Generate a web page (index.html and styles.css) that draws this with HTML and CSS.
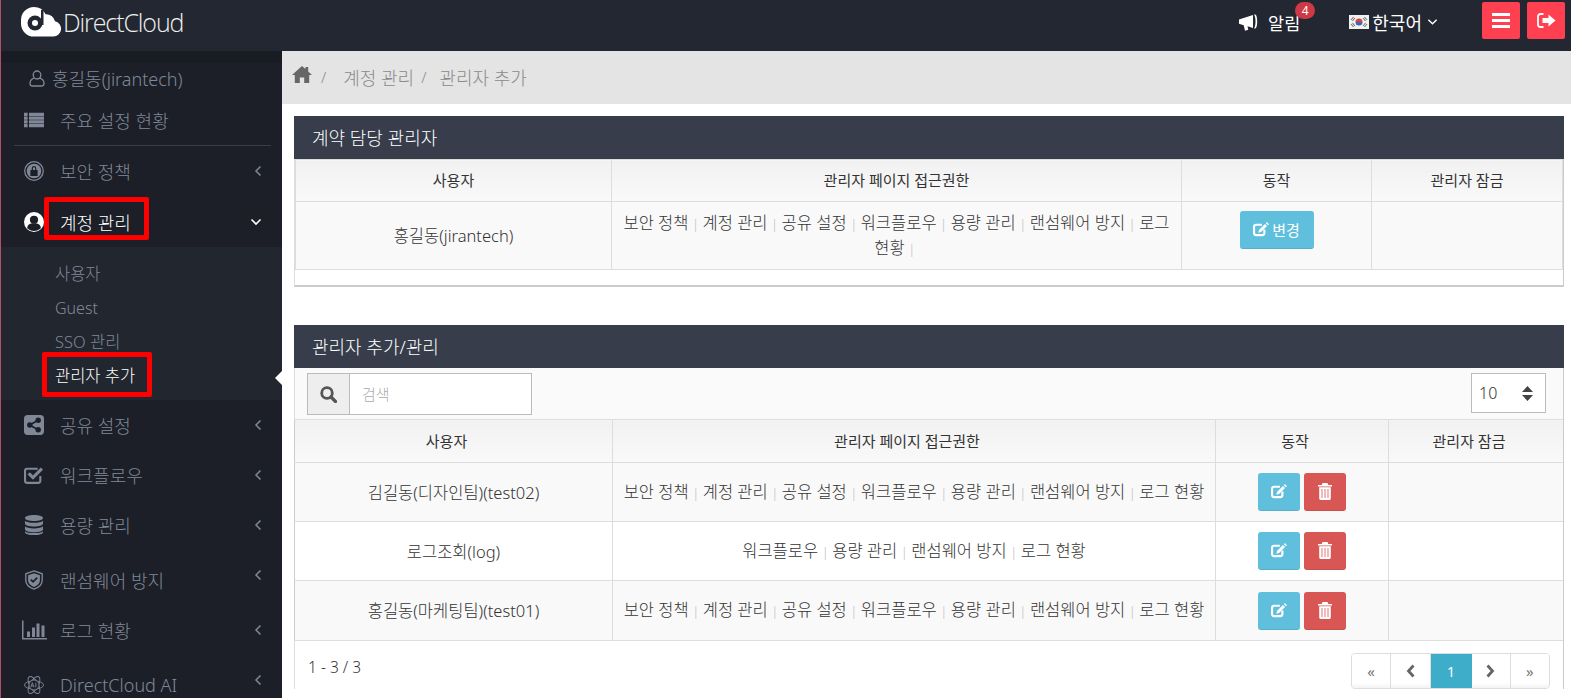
FILE: index.html
```html
<!DOCTYPE html>
<html lang="ko">
<head>
    <meta charset="UTF-8">
    <title>DirectCloud - 관리자 추가</title>
    <link rel="stylesheet" href="styles.css">
</head>
<body>
    <svg class="icon-defs" width="0" height="0">
        <defs>
            <symbol id="i-edit" viewBox="0 0 18 16"><path fill="none" stroke="currentColor" stroke-width="2.400" d="M10 2.700H3.500c-1.300 0-2.300 1-2.300 2.300v7c0 1.300 1 2.300 2.300 2.300h7c1.300 0 2.300-1 2.300-2.300V8"/><path fill="currentColor" d="M13.400 1.800l2.400 2.400-6.700 6.700-3.100.7.700-3.100zM14.400.9l.7-.7c.3-.3.7-.3 1 0l1.400 1.400c.3.3.3.7 0 1l-.7.7z"/></symbol>
            <symbol id="i-trash" viewBox="0 0 14 17"><path fill="currentColor" d="M4.500 0h5l.8 2H14v1.400H0V2h3.700zM1.200 4.200h11.600v11c0 1-.7 1.800-1.600 1.800H2.800c-.9 0-1.600-.8-1.600-1.800zM3.600 6v9h.8V6zm3 0v9h.8V6zm3 0v9h.8V6z"/></symbol>
            <symbol id="i-left" viewBox="0 0 8 12"><path fill="none" stroke="currentColor" stroke-width="1.500" d="M6.500 1.500L2 6l4.500 4.500"/></symbol>
        </defs>
    </svg>

    <header class="topbar">
        <a class="logo">
            <svg class="logo-mark" viewBox="0 0 40 30">
                <path fill="#fff" d="M13 0a13 13 0 0 1 11.600 7.200A9 9 0 0 1 34 14.200a7.800 7.800 0 0 1-1.600 15.400H13A13 13 0 0 1 0 16.300V13A13 13 0 0 1 13 0z"/>
                <circle cx="14" cy="16" r="7.500" fill="#222731"/>
                <circle cx="14" cy="16" r="3" fill="#fff"/>
                <rect x="20" y="3" width="2.500" height="15" fill="#222731"/>
            </svg>
            <span class="logo-text">DirectCloud</span>
        </a>
        <div class="top-right">
            <a class="notice">
                <svg class="notice-icon" viewBox="0 0 20 17"><path fill="#fff" d="M0 5.500L14 1v13L8.500 12.300l.8 3.400-3.300 1-1.300-5.500L0 9.800zM15 .5h1.200c1.200 0 2 3 2 7s-.8 7-2 7H15c1-1.500 1.500-4 1.500-7S16 2 15 .5z"/></svg>
                <span>알림</span>
                <span class="badge">4</span>
            </a>
            <a class="lang">
                <svg class="flag" viewBox="0 0 20 14">
                    <rect width="20" height="14" fill="#f1f1f1"/>
                    <path fill="#d8433f" d="M6.500 7a3.500 3.500 0 0 1 7 0z"/>
                    <path fill="#3f63b5" d="M6.500 7a3.500 3.500 0 0 0 7 0z"/>
                    <path stroke="#777" stroke-width="1.100" d="M2 5l2.500-3M3.500 6L6 3M14 3l2.500 3M15.500 2L18 5M2 9l2.500 3M3.500 8L6 11M14 11l2.500-3M15.500 12L18 9"/>
                </svg>
                <span>한국어</span>
                <svg class="lang-caret" viewBox="0 0 12 8"><path fill="none" stroke="#fff" stroke-width="1.600" d="M1.500 1.500L6 6l4.500-4.500"/></svg>
            </a>
            <div class="top-btns">
                <button class="top-btn">
                    <svg viewBox="0 0 18 15" width="18" height="15"><path fill="#fff" d="M0 0h18v3H0zM0 6h18v3H0zM0 12h18v3H0z"/></svg>
                </button>
                <button class="top-btn">
                    <svg viewBox="0 0 19 15" width="19" height="15"><path fill="none" stroke="#fff" stroke-width="1.800" d="M6.500 1H3.500C2 1 1 2 1 3.500v8C1 13 2 14 3.500 14h3"/><path fill="#fff" d="M5.500 5h6V1.500l7 6-7 6V10h-6z"/></svg>
                </button>
            </div>
        </div>
    </header>

    <div class="layout">
        <nav class="sidebar">
            <div class="profile">
                <svg class="profile-icon" viewBox="0 0 16 17"><path fill="none" stroke="currentColor" stroke-width="1.300" d="M8 1a3.800 3.800 0 0 1 3.800 3.800C11.800 7.500 10 9 8 9S4.200 7.500 4.200 4.800A3.800 3.800 0 0 1 8 1zM5 8.200C2.800 9 1 10.800 1 13.500 1 15 2 16 3.500 16h9c1.500 0 2.500-1 2.500-2.500 0-2.700-1.800-4.500-4-5.300"/></svg>
                <span>홍길동(jirantech)</span>
            </div>
            <a class="nav-item nav-summary">
                <svg class="nav-icon" viewBox="0 0 22 16"><path fill="currentColor" d="M0 0h4v3.500H0zM5.500 0H22v3.500H5.500zM0 4.200h4v3.500H0zM5.500 4.200H22v3.500H5.500zM0 8.400h4v3.500H0zM5.500 8.400H22v3.500H5.500zM0 12.500h4V16H0zM5.500 12.500H22V16H5.500z"/></svg>
                <span>주요 설정 현황</span>
            </a>
            <div class="nav-divider"></div>
            <a class="nav-item">
                <svg class="nav-icon" viewBox="0 0 22 22"><circle cx="11" cy="11" r="10.200" fill="none" stroke="currentColor" stroke-width="1.400"/><circle cx="11" cy="11" r="8" fill="currentColor"/><path fill="#1c1f27" d="M7 10h8v6.500H7zM8.500 10V8a2.500 2.500 0 0 1 5 0v2h-1.300V8a1.200 1.200 0 0 0-2.400 0v2z"/></svg>
                <span>보안 정책</span>
                <svg class="chev"><use href="#i-left"/></svg>
            </a>
            <a class="nav-item nav-open">
                <svg class="nav-icon" viewBox="0 0 22 22"><circle cx="11" cy="11" r="11" fill="#fff"/><circle cx="11" cy="8.500" r="4.500" fill="#1c1f27"/><path fill="#1c1f27" d="M3.500 18c0-3.500 2.500-5.500 7.500-5.500s7.500 2 7.500 5.500c-2 1.800-4.500 2.800-7.500 2.800s-5.500-1-7.500-2.800z"/></svg>
                <span>계정 관리</span>
                <svg class="chev-down" viewBox="0 0 12 8"><path fill="none" stroke="#fff" stroke-width="1.600" d="M1.500 1.500L6 6l4.500-4.500"/></svg>
            </a>
            <div class="submenu">
                <a class="sub-item">사용자</a>
                <a class="sub-item sub-latin">Guest</a>
                <a class="sub-item">SSO 관리</a>
                <a class="sub-item sub-active">관리자 추가</a>
            </div>
            <a class="nav-item">
                <svg class="nav-icon" viewBox="0 0 19 19"><rect width="19" height="19" rx="3.500" fill="currentColor"/><g fill="#1c1f27"><circle cx="5.500" cy="9.500" r="2.600"/><circle cx="13.500" cy="5" r="2.600"/><circle cx="13.500" cy="14" r="2.600"/><path d="M5 8.800l8-4.500.8 1.300-8 4.500zM5.800 8.900l8 4.500-.8 1.300-8-4.500z"/></g></svg>
                <span>공유 설정</span>
                <svg class="chev"><use href="#i-left"/></svg>
            </a>
            <a class="nav-item">
                <svg class="nav-icon" viewBox="0 0 19 18"><path fill="none" stroke="currentColor" stroke-width="2" d="M15.500 10v4.500c0 1.100-.9 2-2 2H3c-1.100 0-2-.9-2-2V5c0-1.100.9-2 2-2h10"/><path fill="none" stroke="currentColor" stroke-width="3" d="M4.500 7.500l4 4L17 3"/></svg>
                <span>워크플로우</span>
                <svg class="chev"><use href="#i-left"/></svg>
            </a>
            <a class="nav-item">
                <svg class="nav-icon" viewBox="0 0 19 21"><path fill="currentColor" d="M9.500 0C14.700 0 19 1.400 19 3.200S14.700 6.400 9.500 6.400 0 5 0 3.200 4.300 0 9.500 0zM0 6c1.500 1.500 5 2.200 9.500 2.200S17.500 7.500 19 6v3c0 1.800-4.300 3.200-9.500 3.200S0 10.800 0 9zM0 11.900c1.500 1.500 5 2.200 9.500 2.200s8-.7 9.500-2.200v3c0 1.800-4.300 3.200-9.500 3.200S0 16.700 0 14.900zM0 17c1.500 1.500 5 2 9.500 2s8-.5 9.500-2v1c0 1.800-4.300 3-9.500 3S0 19.800 0 18z"/></svg>
                <span>용량 관리</span>
                <svg class="chev"><use href="#i-left"/></svg>
            </a>
            <a class="nav-item nav-item-gap">
                <svg class="nav-icon" viewBox="0 0 20 22"><path fill="none" stroke="currentColor" stroke-width="1.500" d="M10 1l9 3.200v7c0 4.500-3.500 8-9 9.800-5.500-1.800-9-5.300-9-9.800v-7z"/><path fill="currentColor" d="M10 3.500l6.500 2.300v5.500c0 3.300-2.500 6-6.500 7.400-4-1.400-6.500-4.100-6.500-7.400V5.800z"/><path fill="none" stroke="#1c1f27" stroke-width="2" d="M6.500 10.500l2.500 2.500 4.500-4.500"/></svg>
                <span>랜섬웨어 방지</span>
                <svg class="chev"><use href="#i-left"/></svg>
            </a>
            <a class="nav-item">
                <svg class="nav-icon nav-icon-wide" viewBox="0 0 25 19"><path fill="currentColor" d="M0 0h1.500v17.500H25V19H0zM5 11h3v5.500H5zM10 7h3v9.500h-3zM14.500 3h3v13.500h-3zM19.500 5h3v11.500h-3z"/></svg>
                <span>로그 현황</span>
                <svg class="chev"><use href="#i-left"/></svg>
            </a>
            <a class="nav-item nav-item-gap">
                <svg class="nav-icon" viewBox="0 0 22 22"><g fill="none" stroke="currentColor" stroke-width="1"><ellipse cx="11" cy="11" rx="10.500" ry="4.500"/><ellipse cx="11" cy="11" rx="10.500" ry="4.500" transform="rotate(60 11 11)"/><ellipse cx="11" cy="11" rx="10.500" ry="4.500" transform="rotate(120 11 11)"/><circle cx="11" cy="11" r="5.500" fill="#1c1f27"/></g><path fill="none" stroke="currentColor" stroke-width="1" d="M7.500 13.500L9.200 8.500l1.700 5M8.200 12h2M13 8.500v5"/></svg>
                <span>DirectCloud AI</span>
                <svg class="chev"><use href="#i-left"/></svg>
            </a>
            <span class="nav-pointer"></span>
            <span class="mark mark-menu"></span>
            <span class="mark mark-sub"></span>
        </nav>

        <main class="content">
            <div class="breadcrumb">
                <svg class="home" viewBox="0 0 20 17"><path fill="#666" d="M10 0l3.500 3.100V1h2.700v4.500L20 9h-2.800v8h-5v-5.500H7.800V17h-5V9H0z"/></svg>
                <span class="crumb-sep">/</span>
                <span class="crumb crumb-first">계정 관리</span>
                <span class="crumb-sep">/</span>
                <span class="crumb">관리자 추가</span>
            </div>

            <section class="panel panel-owner">
                <h2 class="panel-title">계약 담당 관리자</h2>
                <table class="grid">
                    <colgroup>
                        <col class="o-user"><col class="o-perm"><col class="o-act"><col class="o-lock">
                    </colgroup>
                    <thead>
                        <tr><th>사용자</th><th>관리자 페이지 접근권한</th><th>동작</th><th>관리자 잠금</th></tr>
                    </thead>
                    <tbody>
                        <tr class="odd owner-row">
                            <td>홍길동(jirantech)</td>
                            <td class="perm">보안 정책<i>|</i>계정 관리<i>|</i>공유 설정<i>|</i>워크플로우<i>|</i>용량 관리<i>|</i>랜섬웨어 방지<i>|</i>로그 현황<i>|</i></td>
                            <td><button class="btn btn-info btn-change"><svg class="i-edit"><use href="#i-edit"/></svg>변경</button></td>
                            <td></td>
                        </tr>
                    </tbody>
                </table>
            </section>

            <section class="panel panel-admins">
                <h2 class="panel-title">관리자 추가/관리</h2>
                <div class="toolbar">
                    <div class="search">
                        <span class="search-addon">
                            <svg viewBox="0 0 17 17" width="17" height="17"><circle cx="7" cy="7" r="5.300" fill="none" stroke="#555" stroke-width="2.800"/><path stroke="#555" stroke-width="3.200" stroke-linecap="round" d="M11 11l4.500 4.500"/></svg>
                        </span>
                        <input class="search-input" type="text" placeholder="검색">
                    </div>
                    <div class="page-size">
                        <span>10</span>
                        <svg viewBox="0 0 11 15" width="11" height="15"><path fill="#444" d="M5.500 0L11 6H0zM0 9h11l-5.500 6z"/></svg>
                    </div>
                </div>
                <table class="grid">
                    <colgroup>
                        <col class="a-user"><col class="a-perm"><col class="a-act"><col class="a-lock">
                    </colgroup>
                    <thead>
                        <tr><th>사용자</th><th>관리자 페이지 접근권한</th><th>동작</th><th>관리자 잠금</th></tr>
                    </thead>
                    <tbody>
                        <tr class="odd">
                            <td>김길동(디자인팀)(test02)</td>
                            <td class="perm">보안 정책<i>|</i>계정 관리<i>|</i>공유 설정<i>|</i>워크플로우<i>|</i>용량 관리<i>|</i>랜섬웨어 방지<i>|</i>로그 현황</td>
                            <td class="actions"><button class="btn btn-info btn-icon"><svg class="i-edit"><use href="#i-edit"/></svg></button><button class="btn btn-danger btn-icon"><svg class="i-trash"><use href="#i-trash"/></svg></button></td>
                            <td></td>
                        </tr>
                        <tr>
                            <td>로그조회(log)</td>
                            <td class="perm">워크플로우<i>|</i>용량 관리<i>|</i>랜섬웨어 방지<i>|</i>로그 현황</td>
                            <td class="actions"><button class="btn btn-info btn-icon"><svg class="i-edit"><use href="#i-edit"/></svg></button><button class="btn btn-danger btn-icon"><svg class="i-trash"><use href="#i-trash"/></svg></button></td>
                            <td></td>
                        </tr>
                        <tr class="odd row-last">
                            <td>홍길동(마케팅팀)(test01)</td>
                            <td class="perm">보안 정책<i>|</i>계정 관리<i>|</i>공유 설정<i>|</i>워크플로우<i>|</i>용량 관리<i>|</i>랜섬웨어 방지<i>|</i>로그 현황</td>
                            <td class="actions"><button class="btn btn-info btn-icon"><svg class="i-edit"><use href="#i-edit"/></svg></button><button class="btn btn-danger btn-icon"><svg class="i-trash"><use href="#i-trash"/></svg></button></td>
                            <td></td>
                        </tr>
                    </tbody>
                </table>
                <div class="table-foot">
                    <span class="count">1 - 3 / 3</span>
                    <div class="pager">
                        <a class="pg pg-small">«</a>
                        <a class="pg"><svg viewBox="0 0 9 14" width="9" height="14"><path fill="none" stroke="#666" stroke-width="2.800" d="M7.500 1.500L2.500 7l5 5.500"/></svg></a>
                        <a class="pg pg-active">1</a>
                        <a class="pg"><svg viewBox="0 0 9 14" width="9" height="14"><path fill="none" stroke="#666" stroke-width="2.800" d="M1.500 1.500L6.500 7l-5 5.500"/></svg></a>
                        <a class="pg pg-small">»</a>
                    </div>
                </div>
            </section>
        </main>
    </div>
</body>
</html>
```
FILE: styles.css
```css
* {
    box-sizing: border-box;
}

html, body {
    margin: 0;
    padding: 0;
}

body {
    width: 1571px;
    height: 698px;
    overflow: hidden;
    font-family: "Noto Sans", "Noto Sans CJK KR", sans-serif;
    font-size: 15px;
    color: #333;
    background-color: #fff;
    border-left: 1px solid #b0506a;
    display: flex;
    flex-direction: column;
}

.icon-defs {
    position: absolute;
}

/* top bar */
.topbar {
    height: 51px;
    flex: none;
    background-color: #222731;
    display: flex;
    justify-content: space-between;
    color: #fff;
}

.logo {
    display: flex;
    align-items: center;
    padding: 0 0 7px 20px;
}

.logo-mark {
    width: 40px;
    height: 30px;
}

.logo-text {
    font-family: "Open Sans", sans-serif;
    font-weight: 300;
    font-size: 25px;
    letter-spacing: -1.1px;
    margin-left: 2px;
    color: #eee;
}

.top-right {
    display: flex;
    align-items: center;
}

.notice {
    position: relative;
    display: flex;
    align-items: center;
    gap: 9px;
    font-size: 17.5px;
    padding-bottom: 7px;
}

.notice-icon {
    width: 20px;
    height: 17px;
}

.badge {
    position: absolute;
    left: 56px;
    top: -8px;
    min-width: 20px;
    height: 17px;
    border-radius: 9px;
    background-color: #cf3945;
    font-size: 12px;
    line-height: 17px;
    text-align: center;
}

.lang {
    display: flex;
    align-items: center;
    gap: 3px;
    margin-left: 49px;
    font-size: 18px;
    padding-bottom: 7px;
}

.flag {
    width: 20px;
    height: 14px;
}

.lang-caret {
    width: 11px;
    height: 8px;
    margin-left: 2px;
}

.top-btns {
    display: flex;
    gap: 7px;
    margin-left: 44px;
    margin-right: 6px;
    padding-bottom: 11px;
}

.top-btn {
    width: 38px;
    height: 37px;
    border: 0;
    border-radius: 2px;
    background-color: #ff4051;
    display: flex;
    align-items: center;
    justify-content: center;
    padding: 0;
}

.layout {
    flex: 1;
    display: flex;
    min-height: 0;
}

/* sidebar */
.sidebar {
    position: relative;
    width: 281px;
    flex: none;
    background: linear-gradient(#191c23 12px, #1c1f27 12px);
    color: #808898;
    font-size: 18px;
    font-weight: 300;
    padding-top: 12px;
    overflow: hidden;
}

.profile {
    height: 34px;
    display: flex;
    align-items: center;
    gap: 7px;
    padding: 0 0 4px 28px;
    font-size: 18px;
}

.profile-icon {
    width: 16px;
    height: 17px;
}

.nav-item {
    height: 50px;
    display: flex;
    align-items: center;
    padding-left: 23px;
}

.nav-item span {
    flex: 1;
}

.nav-summary {
    height: 46px;
}

.nav-divider {
    height: 1px;
    margin: 2px 11px 0 13px;
    background-color: #3b3e45;
}

.nav-item-gap {
    margin-top: 5px;
}

.nav-item-gap .chev {
    margin-bottom: 10px;
}

.nav-icon {
    width: 20px;
    height: 20px;
    flex: none;
    margin-right: 16px;
}

.nav-icon-wide {
    width: 25px;
    margin-left: -2px;
    margin-right: 13px;
}

.chev {
    width: 8px;
    height: 12px;
    margin-right: 20px;
}

.chev-down {
    width: 12px;
    height: 8px;
    margin-right: 20px;
}

.nav-open {
    height: 51px;
    color: #fff;
}

.submenu {
    height: 153px;
    background-color: #22262f;
    padding-top: 10px;
}

.sub-item {
    display: block;
    height: 34px;
    line-height: 34px;
    padding-left: 54px;
    font-size: 16.5px;
}

.sub-latin {
    font-size: 16px;
}

.sub-active {
    color: #fff;
}

/* white notch pointing at the current page */
.nav-pointer {
    position: absolute;
    right: 0;
    top: 320px;
    border: 7px solid transparent;
    border-right-color: #fff;
    border-left-width: 0;
}

.mark {
    position: absolute;
    border: 5px solid #ff0000;
    border-radius: 2px;
}

.mark-menu {
    left: 43px;
    top: 146px;
    width: 105px;
    height: 43px;
}

.mark-sub {
    left: 41px;
    top: 301px;
    width: 110px;
    height: 45px;
}

/* main */
.content {
    flex: 1;
    min-width: 0;
}

.breadcrumb {
    height: 53px;
    background-color: #e4e4e4;
    color: #8a8a8a;
    font-weight: 300;
    display: flex;
    align-items: center;
    padding: 0 0 2px 10px;
    font-size: 18px;
}

.home {
    width: 20px;
    height: 17px;
    margin: 0 2px 4px 0;
}

.crumb-sep {
    margin: 0 13px 0 7px;
    font-size: 15px;
}

.crumb-first {
    margin-left: 4px;
}

.panel {
    margin-left: 12px;
    margin-right: 7px;
}

.panel-owner {
    margin-top: 12px;
    height: 171px;
    border-bottom: 2px solid #ccc;
    border-left: 1px solid #ddd;
    border-right: 1px solid #ccc;
}

.panel-admins {
    margin-top: 38px;
    border-right: 1px solid #ccc;
}

.panel-title {
    margin: 0;
    height: 43px;
    background-color: #373d4b;
    color: #fff;
    font-size: 18px;
    font-weight: 300;
    line-height: 44px;
    padding-left: 18px;
}

.panel-owner .panel-title {
    margin-left: -1px;
    margin-right: -1px;
}

.panel-admins .panel-title {
    margin-right: -1px;
}

.grid {
    width: 100%;
    table-layout: fixed;
    border-collapse: collapse;
    font-size: 16.5px;
    font-weight: 300;
    line-height: 23px;
}

.grid th,
.grid td {
    border: 1px solid #ddd;
    text-align: center;
    padding: 0 8px;
}

.grid th {
    height: 43px;
    font-size: 15px;
    font-weight: 400;
    background: linear-gradient(#f1f1f1, #f9f9f9);
}

.panel-owner .grid th {
    height: 42px;
}

/* the data table header sits a little left of its column */
.panel-admins .grid th {
    padding-right: 22px;
}

.grid td {
    height: 59px;
}

.row-last td {
    height: 60px;
}

.panel-admins .grid tr > :first-child {
    border-left-color: #ccc;
}

.panel-admins .grid tr > :last-child {
    border-right: 0;
}

.odd td {
    background-color: #f9f9f9;
}

.owner-row td {
    height: 68px;
}

.perm i {
    font-style: normal;
    color: #bbb;
    margin: 0 3.5px;
    font-size: 13px;
}

.o-user { width: 316px; }
.o-perm { width: 570px; }
.o-act { width: 190px; }
.a-user { width: 318px; }
.a-perm { width: 603px; }
.a-act { width: 173px; }

.btn {
    border: 0;
    border-bottom: 1px solid rgba(0, 0, 0, .08);
    border-radius: 3px;
    color: #fff;
    height: 38px;
    padding: 0;
    font-family: inherit;
    font-size: 15px;
    vertical-align: middle;
}

.btn-info {
    background-color: #5fbfdc;
}

.btn-danger {
    background-color: #d85653;
}

.btn-change {
    width: 74px;
    margin-bottom: 12px;
    display: inline-flex;
    align-items: center;
    justify-content: center;
    gap: 3px;
}

.btn-icon {
    width: 42px;
    display: inline-flex;
    align-items: center;
    justify-content: center;
}

.btn-icon + .btn-icon {
    margin-left: 4px;
}

.i-edit {
    width: 16px;
    height: 15px;
}

.i-trash {
    width: 14px;
    height: 17px;
}

.toolbar {
    height: 51px;
    background-color: #fafafa;
    display: flex;
    justify-content: space-between;
    padding: 5px 17px 0 12px;
    border-left: 1px solid #ddd;
}

.search {
    display: flex;
    width: 225px;
    height: 42px;
    border: 1px solid #bbb;
}

.search-addon {
    width: 42px;
    background-color: #eee;
    border-right: 1px solid #bbb;
    display: flex;
    align-items: center;
    justify-content: center;
}

.search-input {
    flex: 1;
    min-width: 0;
    border: 0;
    padding: 0 12px;
    font-family: inherit;
    font-size: 15px;
    font-weight: 300;
    outline: 0;
}

.search-input::placeholder {
    color: #aaa;
}

.page-size {
    width: 75px;
    height: 40px;
    border: 1px solid #bbb;
    background-color: #fff;
    display: flex;
    align-items: center;
    justify-content: space-between;
    padding: 0 12px 0 7px;
    font-size: 16px;
    font-weight: 300;
}

.table-foot {
    display: flex;
    justify-content: space-between;
    padding: 12px 13px 0 13px;
    border-left: 1px solid #ddd;
}

.count {
    font-size: 15.500px;
    font-weight: 300;
    margin-top: 3px;
}

.pager {
    display: flex;
    width: 199px;
    height: 36px;
    border: 1px solid #ddd;
    border-radius: 4px;
    overflow: hidden;
}

.pg {
    flex: 1;
    display: flex;
    align-items: center;
    justify-content: center;
    color: #777;
    border-right: 1px solid #ddd;
    background: linear-gradient(#fff 85%, #f3f3f3);
}

.pg:last-child {
    border-right: 0;
}

.pg-small {
    font-size: 15px;
}

.pg-active {
    flex: none;
    width: 41px;
    background: #3dadc9;
    color: #fff;
    border-right: 0;
    font-size: 14px;
}
```
